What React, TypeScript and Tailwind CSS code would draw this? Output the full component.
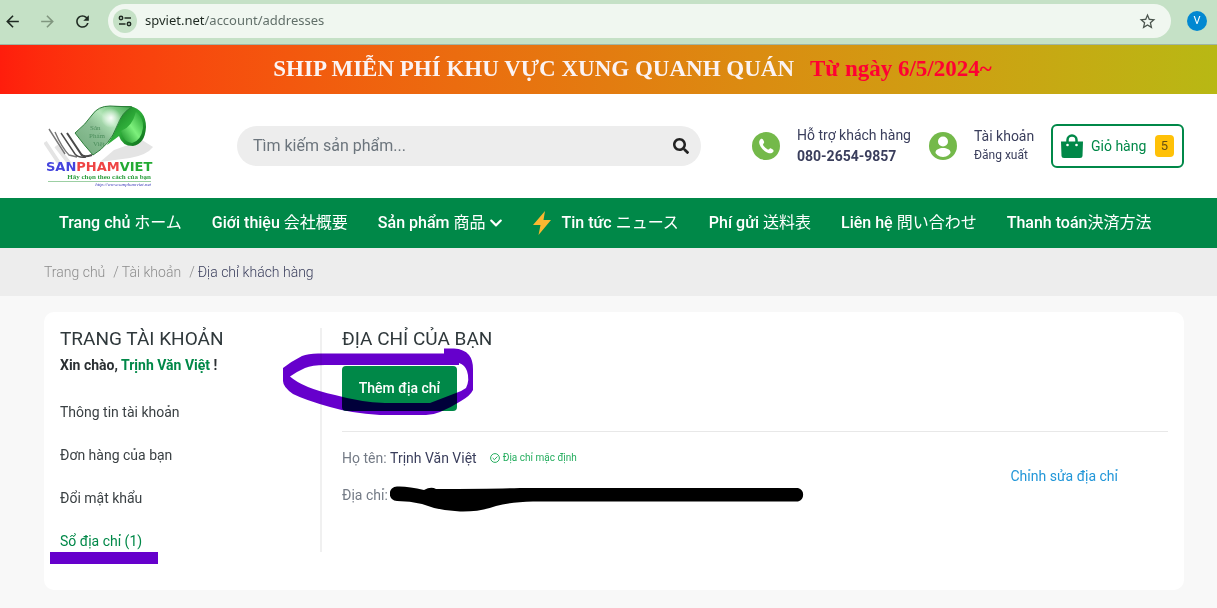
import type { ReactNode } from "react";
import { FaChevronDown, FaSearch } from "react-icons/fa";
import {
  MdArrowBack,
  MdArrowForward,
  MdRefresh,
  MdStarOutline,
} from "react-icons/md";

const breadcrumbs = ["Trang chủ", "Tài khoản"];

const accountLinks = [
  { label: "Thông tin tài khoản", active: false },
  { label: "Đơn hàng của bạn", active: false },
  { label: "Đổi mật khẩu", active: false },
  { label: "Sổ địa chỉ (1)", active: true },
];

function Container({ children }: { children: ReactNode }) {
  return <div className="pl-11 pr-[33px]">{children}</div>;
}

function BrowserBar() {
  return (
    <div className="flex h-[45px] items-center border-b border-[#9fb5a4] bg-[#c5e1c6] pl-[3px] pr-[10px] pb-[2px] text-[#1f2a22]">
      <button aria-label="Back" className="mr-4 shrink-0">
        <MdArrowBack size={19} />
      </button>
      <button aria-label="Forward" className="mr-4 shrink-0 text-[#80967f]">
        <MdArrowForward size={19} />
      </button>
      <button aria-label="Reload" className="mr-4 shrink-0">
        <MdRefresh size={19} />
      </button>
      <div className="flex h-[34px] flex-1 items-center rounded-full bg-[#f0f7f0] pl-[5px] pr-[14px]">
        <button
          aria-label="Site information"
          className="flex size-6 shrink-0 items-center justify-center rounded-full bg-[#c5e1c6]"
        >
          <svg width="14" height="14" viewBox="0 0 14 14" fill="none" stroke="currentColor" strokeWidth="1.5">
            <circle cx="3" cy="4" r="1.7" />
            <path d="M6.5 4H13M1 10h6.5" />
            <circle cx="11" cy="10" r="1.7" />
          </svg>
        </button>
        <p className="ml-2 flex-1 font-['Noto_Sans',sans-serif] text-[13px] text-[#62706a]">
          <span className="text-[#1f2a22]">spviet.net</span>/account/addresses
        </p>
        <button aria-label="Bookmark" className="text-[#4b554e]">
          <MdStarOutline size={19} />
        </button>
      </div>
      <button
        aria-label="Profile"
        className="ml-4 flex size-5 shrink-0 items-center justify-center rounded-full bg-[#0288d1] text-[11px] text-white"
      >
        V
      </button>
    </div>
  );
}

function Banner() {
  return (
    <div className="flex h-[49px] items-center justify-center bg-linear-to-r from-[#ff1d0c] via-[#e37c10] to-[#b8b814] pl-12 font-['Liberation_Serif',serif] text-[23px] font-black whitespace-nowrap">
      <span className="text-[#fbf3f3]">SHIP MIỄN PHÍ KHU VỰC XUNG QUANH QUÁN</span>
      <span className="ml-4 text-[#ff0033]">Từ ngày 6/5/2024~</span>
    </div>
  );
}

function Logo() {
  return (
    <svg width="112" height="84" viewBox="0 0 112 84" role="img" aria-label="Sanphamviet">
      <defs>
        <linearGradient id="sheet" x1="0" y1="1" x2="1" y2="0">
          <stop offset="0" stopColor="#6fa87a" />
          <stop offset="0.45" stopColor="#8cbf95" />
          <stop offset="0.65" stopColor="#b5e6ba" />
          <stop offset="1" stopColor="#3aa846" />
        </linearGradient>
        <linearGradient id="roll" x1="0" y1="0" x2="1" y2="1">
          <stop offset="0" stopColor="#0f6e1c" />
          <stop offset="0.5" stopColor="#2fae3a" />
          <stop offset="1" stopColor="#0a6a18" />
        </linearGradient>
        <linearGradient id="curl" x1="0" y1="1" x2="1" y2="0">
          <stop offset="0" stopColor="#128a22" />
          <stop offset="0.5" stopColor="#7df07c" />
          <stop offset="1" stopColor="#1d9a2b" />
        </linearGradient>
        <radialGradient id="glow">
          <stop offset="0" stopColor="#ffffff" stopOpacity="0.95" />
          <stop offset="1" stopColor="#ffffff" stopOpacity="0" />
        </radialGradient>
      </defs>
      <path d="M70 46 98 36 109 43Q103 51 86 54L56 58Z" fill="#e4e4e4" />
      <path d="M1 38 15 59M12 42 26 60" stroke="#e4e4e4" strokeWidth="4" />
      <path
        d="M70 2H86Q102 6 102 23 101 40 89 42 78 42 75 32L63 41Q72 27 76 14Z"
        fill="url(#roll)"
      />
      <path d="M77 27Q88 23 92 8 100 14 99 24 97 37 88 39 79 38 77 27Z" fill="url(#curl)" />
      <path
        d="M31 29Q42 20 48 11 54 2 66 2L88 3Q78 8 73 22 66 41 49 51 40 41 31 29Z"
        fill="url(#sheet)"
        stroke="#2c7d3a"
      />
      <circle cx="67" cy="14" r="10" fill="url(#glow)" />
      <g fill="none" stroke="#4a4a4a" strokeWidth="1.4">
        <path d="M5 25 21 50M11 28Q18 44 25 51L33 53" stroke="#777" />
        <path d="M17 29 31 50Q34 54 42 53" />
        <path d="M23 29 37 50Q39 54 48 51" strokeWidth="2" />
      </g>
      <g fill="#4d8f5d" className="font-['Liberation_Serif',serif] text-[7px]">
        <text x="46" y="26">Sản</text>
        <text x="45" y="34">Phẩm</text>
        <text x="49" y="42">Việt</text>
      </g>
      <text x="2" y="67" className="font-['DejaVu_Sans',sans-serif] text-[13px] font-bold">
        <tspan fill="#4444dd">SAN</tspan>
        <tspan fill="#ee4444">PHAM</tspan>
        <tspan fill="#22aa33">VIET</tspan>
      </text>
      <text x="107" y="75" textAnchor="end" fill="#2fa040" className="font-['Liberation_Serif',serif] text-[7px] font-bold">
        Hãy chọn theo cách của bạn
      </text>
      <path d="M4 77.500H107" stroke="#9ccfa3" />
      <text x="107" y="82" textAnchor="end" fill="#3a3ab8" className="font-['Liberation_Serif',serif] text-[5px] italic">
        http://www.sanphamviet.net
      </text>
    </svg>
  );
}

function Header() {
  return (
    <header className="bg-white">
      <Container>
        <div className="flex h-[104px] items-center">
          <a href="#" className="w-[193px] shrink-0">
            <Logo />
          </a>
          <form className="flex h-10 flex-1 items-center rounded-full bg-[#ededed] pl-4 pr-3">
            <input
              type="text"
              aria-label="Tìm kiếm sản phẩm"
              placeholder="Tìm kiếm sản phẩm..."
              className="min-w-0 flex-1 bg-transparent text-base text-[#555] outline-none placeholder:text-[#6c757d]"
            />
            <button aria-label="Tìm kiếm" className="text-[#222]">
              <FaSearch size={16} />
            </button>
          </form>
          <div className="ml-[51px] flex items-center">
            <svg width="28" height="28" viewBox="0 0 28 28" className="shrink-0">
              <circle cx="14" cy="14" r="14" fill="#74b94a" />
              <path
                d="M8.500 7.200c.8-.8 2-.6 2.500.3l1 2c.3.700.2 1.300-.4 1.900-.8.700-.7 1.400.1 2.500 1 1.300 2.200 2.500 3.700 3.300.8.400 1.300.3 1.900-.3.500-.6 1.100-.7 1.800-.3l1.700 1c.9.600 1 1.600.3 2.400-1.300 1.600-3.300 1.700-5.500.7-3.600-1.600-6.500-4.600-8-8.200-.8-2-.5-4 .9-5.300Z"
                fill="#fff"
              />
            </svg>
            <div className="ml-[17px] w-[116px] whitespace-nowrap text-[#3a3e5c]">
              <p className="text-[14px] leading-[21px]">Hỗ trợ khách hàng</p>
              <a href="tel:08026549857" className="block text-[14px] font-bold leading-[21px]">
                080-2654-9857
              </a>
            </div>
          </div>
          <div className="ml-4 flex items-center">
            <svg width="28" height="28" viewBox="0 0 28 28" className="shrink-0">
              <circle cx="14" cy="14" r="14" fill="#74b94a" />
              <circle cx="14" cy="9.500" r="5" fill="#fff" />
              <path d="M6.500 20.500c0-6 15-6 15 0 0 1-3 4.500-7.500 4.500s-7.500-3.500-7.500-4.500Z" fill="#fff" />
            </svg>
            <div className="ml-[17px] w-[61px] whitespace-nowrap text-[#3a3e5c]">
              <a href="#" className="block text-[14px] leading-[19px]">Tài khoản</a>
              <a href="#" className="block text-[12px] leading-[19px]">Đăng xuất</a>
            </div>
          </div>
          <a
            href="#"
            className="ml-4 flex h-11 w-[133px] items-center rounded-md border-2 border-[#008848] pl-2 text-[14px] whitespace-nowrap text-[#008848]"
          >
            <svg width="22" height="24" viewBox="0 0 22 24" className="shrink-0">
              <path d="M6.500 9V6a4.500 4.500 0 0 1 9 0V9" fill="none" stroke="#008848" strokeWidth="2.500" />
              <path d="M0 7.500H22L21.500 22Q21.500 24 19 24H3Q.5 24 .5 22Z" fill="#008848" />
              <circle cx="6.500" cy="11" r="1.300" fill="#fff" />
              <circle cx="15.500" cy="11" r="1.300" fill="#fff" />
            </svg>
            <span className="ml-2 flex-1">Giỏ hàng</span>
            <span className="mr-2 flex h-[22px] w-[19px] items-center justify-center rounded-sm bg-[#ffc107] text-[13px] text-[#664f12]">
              5
            </span>
          </a>
        </div>
      </Container>
    </header>
  );
}

function Nav() {
  return (
    <nav className="bg-[#008848]">
      <Container>
        <div className="flex h-[50px] items-center gap-[30px] pl-[15px] font-[Roboto,'Noto_Sans_CJK_JP',sans-serif] text-base font-medium whitespace-nowrap text-white">
          <a href="#">Trang chủ <span className="font-normal">ホーム</span></a>
          <a href="#">Giới thiệu <span className="font-normal">会社概要</span></a>
          <a href="#" className="flex items-center gap-1">
            <span>Sản phẩm <span className="font-normal">商品</span></span>
            <FaChevronDown size={14} />
          </a>
          <a href="#" className="flex items-center gap-[10px]">
            <svg width="18" height="24" viewBox="0 0 18 24">
              <path d="M12 0 0 14H7.500L5.500 24 18 9H10.500Z" fill="#fbb731" />
            </svg>
            <span>Tin tức <span className="font-normal">ニュース</span></span>
          </a>
          <a href="#">Phí gửi <span className="font-normal">送料表</span></a>
          <a href="#">Liên hệ <span className="font-normal">問い合わせ</span></a>
          <a href="#">Thanh toán<span className="font-normal">決済方法</span></a>
        </div>
      </Container>
    </nav>
  );
}

function Breadcrumb() {
  return (
    <div className="bg-[#ededed]">
      <Container>
        <div className="flex h-12 items-center text-[14px] font-light text-[#8c8c8c]">
          {breadcrumbs.map((item) => (
            <span key={item}>
              <a href="#">{item}</a>
              <span className="ml-2 mr-[3px]">/</span>
            </span>
          ))}
          <span className="text-[#3a3e5c]">Địa chỉ khách hàng</span>
        </div>
      </Container>
    </div>
  );
}

function Sidebar() {
  return (
    <aside className="h-56 w-[262px] shrink-0 border-r-2 border-[#f0f0f0] text-[14px] text-[#3b4144]">
      <h1 className="text-[19px] leading-[22px] text-[#2f383b]">TRANG TÀI KHOẢN</h1>
      <p className="mt-1 font-bold leading-[22px] text-[#2b3033]">
        Xin chào, <span className="text-[#008848]">Trịnh Văn Việt</span> !
      </p>
      <ul className="mt-[25px] flex flex-col gap-[21px] leading-[22px]">
        {accountLinks.map((link) => (
          <li key={link.label} className="relative">
            <a href="#" className={link.active ? "text-[#008848]" : ""}>
              {link.label}
            </a>
            {link.active && (
              <span className="absolute -left-[10px] top-[22px] h-3 w-[108px] bg-[#6600cc]" />
            )}
          </li>
        ))}
      </ul>
    </aside>
  );
}

function Addresses() {
  return (
    <section className="ml-5 flex-1 text-[14px]">
      <h2 className="text-[19px] leading-[22px] text-[#2f383b]">ĐỊA CHỈ CỦA BẠN</h2>
      <div className="relative mt-4 w-[115px]">
        <button className="h-[45px] w-full rounded-sm bg-[#008848] font-medium text-white">
          Thêm địa chỉ
        </button>
        {/* hand-drawn ring around the button */}
        <svg
          width="192"
          height="68"
          viewBox="282 348 192 68"
          className="pointer-events-none absolute -left-[60px] -top-[18px] max-w-none mix-blend-multiply"
        >
          <path
            fillRule="evenodd"
            fill="#6600cc"
            d="M444 348.500H454Q464 349 469 355 473 360 473 369V390Q470 396 461 401 450 408 440 412 433 415 426 415H380Q350 413 330 407 305 400 293 394 283 387 283 381V368Q292 361 302 356 308 353.500 318 353.500H444ZM290 376.500Q298 371 305 368 312 365 325 365H459V363Q465 365 467 371 470 380 466 388 462 391 456 393L430 403H385Q360 402 335 395 303 388 290 376.500Z"
          />
        </svg>
      </div>
      <hr className="mt-5 border-[#e8e8e8]" />
      <div className="mt-[15px] flex items-center text-[#747b86]">
        <div className="flex-1">
          <p className="flex items-center leading-[22px]">
            Họ tên:&nbsp;<span className="text-[#3a3e5c]">Trịnh Văn Việt</span>
            <span className="ml-[13px] flex items-center gap-[3px] text-[10px] text-[#27ae60]">
              <svg width="10" height="10" viewBox="0 0 10 10" fill="none" stroke="currentColor">
                <circle cx="5" cy="5" r="4.400" />
                <path d="m2.700 5 1.700 1.700 3-3.200" />
              </svg>
              Địa chỉ mặc định
            </span>
          </p>
          <p className="relative mt-[15px] leading-[22px]">
            Địa chỉ:
            <svg
              width="416"
              height="26"
              viewBox="390 486 416 26"
              className="absolute left-12 top-[2px] max-w-none"
            >
              <path d="M397 486.500Q408 486 424 490 431 486 436 489 490 489 520 488H798A7 7 0 0 1 798 501.500H533Q510 502 496 506 480 512 460 511.500 440 511 422 504 410 501 397 501A7 7 0 0 1 397 486.500Z" />
            </svg>
          </p>
        </div>
        <a href="#" className="mr-[50px] text-[#2196d8]">Chỉnh sửa địa chỉ</a>
      </div>
    </section>
  );
}

export default function App() {
  return (
    <div className="min-h-screen bg-[#f8f8f8] font-[Roboto,sans-serif]">
      <BrowserBar />
      <Banner />
      <Header />
      <Nav />
      <Breadcrumb />
      <main className="py-4">
        <Container>
          <div className="flex min-h-[278px] rounded-[10px] bg-white p-4">
            <Sidebar />
            <Addresses />
          </div>
        </Container>
      </main>
    </div>
  );
}
